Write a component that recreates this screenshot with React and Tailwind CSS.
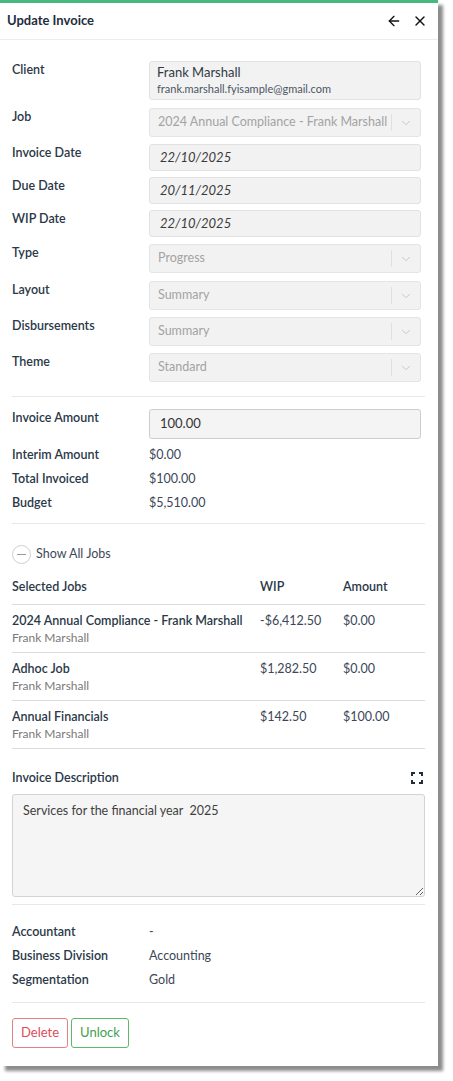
import { ArrowLeft, X, ChevronDown } from 'lucide-react';

const Label = ({ children }) => (
  <div className="w-[137px] shrink-0 text-[12.5px] font-semibold leading-[18px] text-[#2a3848]">{children}</div>
);

const SelectBox = ({ value }) => (
  <div className="flex h-[29px] min-w-0 flex-1 items-center rounded-[3px] border border-[#e4e4e4] bg-[#f2f2f2]">
    <span className="min-w-0 flex-1 truncate pl-[8px] text-[12.5px] text-[#a3a3a3]">{value}</span>
    <span className="h-[17px] w-px bg-[#e0e0e0]" />
    <span className="flex w-[28px] justify-center text-[#c4c4c4]">
      <ChevronDown size={14} strokeWidth={1.6} />
    </span>
  </div>
);

const DateBox = ({ value }) => (
  <div className="flex h-[27px] flex-1 items-center rounded-[3px] border border-[#e2e2e2] bg-[#f2f2f2] pl-[10px] text-[13px] italic text-[#3a3a3a]">
    {value}
  </div>
);

const Row = ({ label, children, className = '' }) => (
  <div className={`flex ${className}`}>
    <Label>{label}</Label>
    <div className="mr-[4px] flex min-w-0 flex-1">{children}</div>
  </div>
);

const InfoRow = ({ label, value }) => (
  <div className="flex h-[24px] items-center">
    <Label>{label}</Label>
    <span className="text-[12.5px] text-[#3b4757]">{value}</span>
  </div>
);

const jobs = [
  { name: '2024 Annual Compliance - Frank Marshall', wip: '-$6,412.50', amount: '$0.00' },
  { name: 'Adhoc Job', wip: '$1,282.50', amount: '$0.00' },
  { name: 'Annual Financials', wip: '$142.50', amount: '$100.00' },
];

export default function App() {
  return (
    <div className="min-h-screen bg-white" style={{ fontFamily: 'Lato, "Open Sans", sans-serif' }}>
      <div className="flex h-[1066px] w-[438px] flex-col bg-white shadow-[5px_5px_3px_rgba(0,0,0,0.45)]">
        <div className="h-[3px] bg-[#46b980]" />
        <div className="flex h-[37px] items-center justify-between border-b border-[#ededed] pl-[7px] pr-[10px]">
          <span className="text-[13px] font-bold text-[#1f2d3d]">Update Invoice</span>
          <div className="flex items-center gap-[10px] text-[#111]">
            <ArrowLeft size={16} strokeWidth={2} />
            <X size={16} strokeWidth={2} />
          </div>
        </div>

        <div className="flex flex-1 flex-col pl-[12px] pr-[13px] pt-[21px]">
          <Row label="Client" className="mb-[8px]">
            <div className="flex h-[39px] flex-1 flex-col justify-center rounded-[3px] border border-[#e2e2e2] bg-[#f2f2f2] pl-[7px]">
              <span className="text-[13px] leading-[17px] text-[#2f3a46]">Frank Marshall</span>
              <span className="text-[11px] leading-[16px] text-[#4b5563]">frank.marshall.fyisample@gmail.com</span>
            </div>
          </Row>
          <Row label="Job" className="mb-[7px]">
            <SelectBox value="2024 Annual Compliance - Frank Marshall" />
          </Row>
          <Row label="Invoice Date" className="mb-[6px]">
            <DateBox value="22/10/2025" />
          </Row>
          <Row label="Due Date" className="mb-[6px]">
            <DateBox value="20/11/2025" />
          </Row>
          <Row label="WIP Date" className="mb-[7px]">
            <DateBox value="22/10/2025" />
          </Row>
          <Row label="Type" className="mb-[8px]">
            <SelectBox value="Progress" />
          </Row>
          <Row label="Layout" className="mb-[7px]">
            <SelectBox value="Summary" />
          </Row>
          <Row label="Disbursements" className="mb-[7px]">
            <SelectBox value="Summary" />
          </Row>
          <Row label="Theme">
            <SelectBox value="Standard" />
          </Row>

          <div className="mb-[12px] mt-[14px] h-px bg-[#e8e8e8]" />

          <Row label="Invoice Amount">
            <div className="flex h-[30px] flex-1 items-center rounded-[3px] border border-[#cdcdcd] bg-[#f4f4f4] pl-[10px] text-[13px] text-[#333]">
              100.00
            </div>
          </Row>
          <div className="mt-[4px]">
            <InfoRow label="Interim Amount" value="$0.00" />
            <InfoRow label="Total Invoiced" value="$100.00" />
            <InfoRow label="Budget" value="$5,510.00" />
          </div>

          <div className="mt-[8px] h-px bg-[#e8e8e8]" />

          <div className="mt-[21px] flex items-center gap-[5px]">
            <span className="flex h-[19px] w-[19px] items-center justify-center rounded-full border border-[#cfcfcf]">
              <span className="h-px w-[9px] bg-[#9a9a9a]" />
            </span>
            <span className="text-[12.5px] text-[#3d4a5a]">Show All Jobs</span>
          </div>

          <div className="mt-[14px] flex border-b border-[#dcdcdc] pb-[8px] text-[12.5px] font-semibold leading-[18px] text-[#2a3848]">
            <span className="w-[248px]">Selected Jobs</span>
            <span className="w-[83px]">WIP</span>
            <span>Amount</span>
          </div>
          {jobs.map((j) => (
            <div key={j.name} className="flex h-[48px] border-b border-[#dcdcdc] pt-[7px]">
              <div className="w-[248px]">
                <div className="text-[12.5px] font-semibold leading-[18px] text-[#2a3848]">{j.name}</div>
                <div className="text-[12px] leading-[16px] text-[#7a7a7a]">Frank Marshall</div>
              </div>
              <span className="w-[83px] text-[12.5px] leading-[18px] text-[#3b4757]">{j.wip}</span>
              <span className="text-[12.5px] leading-[18px] text-[#3b4757]">{j.amount}</span>
            </div>
          ))}

          <div className="mt-[20px] flex items-center justify-between">
            <span className="text-[12.5px] font-semibold leading-[18px] text-[#2a3848]">Invoice Description</span>
            <svg width="12" height="12" viewBox="0 0 12 12" className="mr-[2px]" fill="none" stroke="#1f2d3d" strokeWidth="2">
              <path d="M1 4V1h3M8 1h3v3M11 8v3H8M4 11H1V8" />
            </svg>
          </div>
          <textarea
            readOnly
            defaultValue="Services for the financial year  2025"
            className="mt-[7px] block h-[103px] w-full resize-y rounded-[3px] border border-[#d3d3d3] bg-[#f5f5f5] px-[10px] pt-[7px] text-[12.5px] text-[#3f3f3f] outline-none"
            style={{ fontFamily: 'inherit' }}
          />

          <div className="mt-[7px] h-px bg-[#e8e8e8]" />

          <div className="mt-[15px]">
            <InfoRow label="Accountant" value="-" />
            <InfoRow label="Business Division" value="Accounting" />
            <InfoRow label="Segmentation" value="Gold" />
          </div>

          <div className="mt-[10px] h-px bg-[#e8e8e8]" />

          <div className="mt-[15px] flex gap-[3px]">
            <button className="h-[30px] w-[56px] rounded-[3px] border border-[#e57f87] text-[13px] text-[#e14a59]">Delete</button>
            <button className="h-[30px] w-[58px] rounded-[3px] border border-[#5cb96a] text-[13px] text-[#3f9f4f]">Unlock</button>
          </div>
        </div>
      </div>
    </div>
  );
}
